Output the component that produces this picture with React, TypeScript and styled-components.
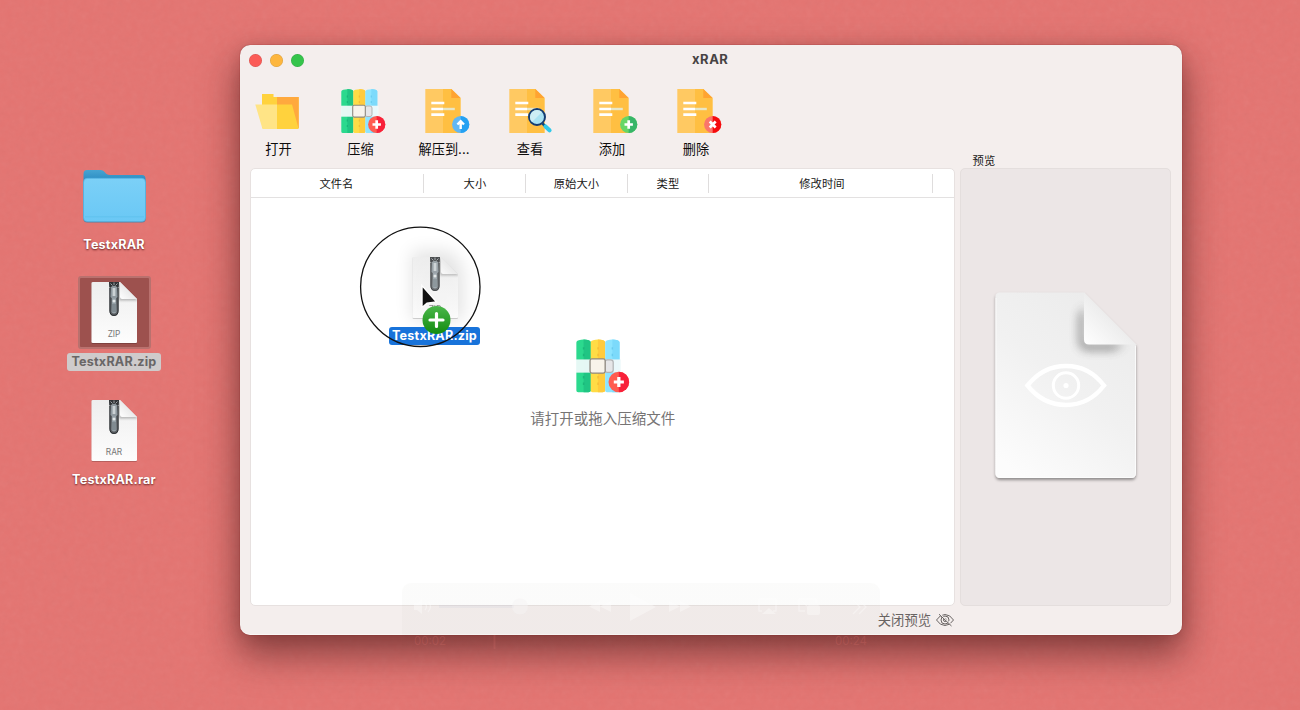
import React from "react";
import styled, { createGlobalStyle } from "styled-components";

const GlobalStyle = createGlobalStyle`
  * { box-sizing: border-box; }
  body {
    margin: 0;
    font-family: Inter, "Noto Sans CJK SC", sans-serif;
    color: #1c1a1a;
  }
  svg { display: block; overflow: visible; }
`;

const Desktop = styled.main`
  position: relative;
  width: 1300px;
  height: 710px;
  overflow: hidden;
  background: #e47471;
`;

const Grain = styled.svg`
  position: absolute;
  inset: 0;
  opacity: 0.06;
`;

const DesktopItem = styled.div<{ $top: number }>`
  position: absolute;
  left: 54px;
  top: ${(p) => p.$top}px;
  width: 120px;
  display: flex;
  flex-direction: column;
  align-items: center;
`;

const IconTile = styled.div<{ $selected?: boolean }>`
  width: 73px;
  height: 73px;
  border-radius: 3px;
  border: 2px solid ${(p) => (p.$selected ? "#b9716e" : "transparent")};
  background: ${(p) => (p.$selected ? "#9d514e" : "transparent")};
  display: flex;
  align-items: center;
  justify-content: center;
`;

const FileLabel = styled.span<{ $tone?: "muted" | "active"; $gap?: number }>`
  margin-top: ${(p) => p.$gap ?? 4}px;
  height: 18px;
  padding: 0 4px;
  border-radius: 3px;
  font-size: 12.6px;
  line-height: 18px;
  font-weight: 700;
  letter-spacing: 0.2px;
  white-space: nowrap;
  color: ${(p) => (p.$tone === "muted" ? "#696666" : "#fff")};
  background: ${(p) =>
    p.$tone === "muted" ? "#cfcbcb" : p.$tone === "active" ? "#1873da" : "transparent"};
  text-shadow: ${(p) => (p.$tone ? "none" : "0 1px 2px rgba(60,0,0,.75)")};
`;

const Window = styled.section`
  position: absolute;
  left: 240px;
  top: 45px;
  width: 941.5px;
  height: 590px;
  border-radius: 10px;
  background: #f4eeed;
  box-shadow: inset 0 -1px 0 rgba(255, 255, 255, 0.5), 0 0 1px rgba(110, 0, 0, 0.9),
    0 18px 36px 2px rgba(60, 20, 20, 0.55), 0 2px 14px rgba(60, 10, 10, 0.12);
  display: flex;
  flex-direction: column;
`;

const TitleBar = styled.header`
  height: 29px;
  padding: 0 14px 0 8px;
  display: grid;
  grid-template-columns: 100px 1fr 100px;
  align-items: center;
`;

const Lights = styled.div`
  display: flex;
  gap: 8px;
  padding: 1px 0 0 0.5px;
`;

const Light = styled.span<{ $color: string }>`
  width: 13px;
  height: 13px;
  border-radius: 50%;
  background: ${(p) => p.$color};
  box-shadow: inset 0 0 0 0.5px rgba(0, 0, 0, 0.15);
`;

const Title = styled.h1`
  margin: 0;
  padding: 0 0 1px 5px;
  text-align: center;
  font-size: 13px;
  line-height: 16px;
  font-weight: 700;
  letter-spacing: 0.5px;
  color: #474343;
`;

const Toolbar = styled.nav`
  height: 94px;
  padding: 13px 0 0 7px;
  display: flex;
  gap: 24px;
`;

const Tool = styled.button`
  width: 60px;
  height: 76px;
  padding: 0;
  border: 0;
  background: none;
  font: 13.2px/20px Inter, "Noto Sans CJK SC", sans-serif;
  color: #0d0c0c;
  white-space: nowrap;
  display: flex;
  flex-direction: column;
  align-items: center;
`;

const ToolText = styled.span<{ $nudge: number }>`
  margin-top: 2px;
  padding-left: ${(p) => Math.max(p.$nudge, 0)}px;
  padding-right: ${(p) => Math.max(-p.$nudge, 0)}px;
`;

const Content = styled.div`
  height: 438px;
  padding: 0 10.5px 0 10.4px;
  display: flex;
  gap: 5.1px;
`;

const FileTable = styled.section`
  width: 704.5px;
  border: 1px solid #e7e1e0;
  border-radius: 5px;
  background: #fff;
  display: flex;
  flex-direction: column;
`;

const HeaderRow = styled.div`
  height: 29px;
  border-bottom: 1px solid #e3e1e1;
  display: grid;
  grid-template-columns: 173px 102px 102px 81px 224px 20px;
  align-items: center;
`;

const HeaderCell = styled.div<{ $shift?: number }>`
  height: 19px;
  border-right: 1px solid #dfdddd;
  text-align: center;
  padding-right: ${(p) => Math.max(p.$shift ?? 0, 0)}px;
  padding-left: ${(p) => Math.max(-(p.$shift ?? 0), 0)}px;
  font-size: 11.3px;
  line-height: 20px;
  color: #181717;
  &:last-child { border: 0; }
`;

const DropArea = styled.div`
  flex: 1;
  padding-top: 138.5px;
  display: flex;
  flex-direction: column;
  align-items: center;
  & > svg { margin-right: 5px; }
`;

const DropHint = styled.p`
  margin: 11px 0 0;
  font-size: 14.5px;
  line-height: 22px;
  color: #767474;
`;

const PreviewColumn = styled.aside`
  width: 211px;
  margin-top: -17px;
  display: flex;
  flex-direction: column;
`;

const PreviewTitle = styled.h2`
  margin: 0 0 0 12.6px;
  height: 17px;
  font-size: 11.3px;
  line-height: 20px;
  font-weight: 400;
  color: #181616;
`;

const PreviewPane = styled.div`
  flex: 1;
  border: 1px solid #e4dedd;
  border-radius: 5px;
  background: #ece6e6;
  display: flex;
  justify-content: center;
  padding: 123px 0 0 1px;
`;

const Footer = styled.footer`
  flex: 1;
  display: flex;
  align-items: center;
  justify-content: flex-end;
  gap: 5px;
  padding: 0 227.5px 2px 0;
  font-size: 13.3px;
  color: #696463;
`;

const PlayerGhost = styled.div`
  position: absolute;
  left: 402px;
  top: 583px;
  width: 478px;
  height: 72px;
  border-radius: 9px;
  background: linear-gradient(rgba(60, 60, 30, 0.02) 70%, rgba(60, 60, 30, 0));
`;

const PlayerControls = styled.div`
  height: 48px;
`;

const PlayerTimes = styled.div`
  display: flex;
  justify-content: space-between;
  padding: 2px 13px 0 12px;
  font-size: 11.5px;
  line-height: 16px;
  color: rgba(235, 120, 115, 0.2);
`;

const DragLayer = styled.div`
  position: absolute;
  left: 360px;
  top: 226px;
`;

const DragLabel = styled(FileLabel)`
  position: absolute;
  left: 29px;
  top: 101px;
  width: 91px;
  padding: 0 3px;
  margin: 0;
`;

const DragLens = styled.svg`
  position: relative;
`;

function Zipper() {
  return (
    <g>
      <path d="M18 0H28L27.400 8V28.500Q27.400 34 23 34T18.600 28.500V8Z" fill="#5b5f63" />
      <path d="M18 0H28L27.600 5H18.400Z" fill="#303336" />
      <path d="M18.900 6V29Q19 33.400 23 33.400T27.100 29V6" fill="none" stroke="#2b2f32" strokeWidth="1" />
      <path d="M19.500 1.500 21.500 3.500M26.500 1.500 24.500 3.500M23 .5V3" stroke="#aab0b3" strokeWidth=".9" />
      <path d="M20 5Q23 2.500 26 5L26.500 15Q23 19 19.500 15Z" fill="#8f999f" />
      <path d="M21.600 6H24.400V14H21.600Z" fill="#cbd2d5" />
      <path d="M21 16H25L25.500 30Q23 33 20.500 30Z" fill="#95a0a6" />
      <circle cx="23" cy="19" r="1.500" fill="#e3e7e8" />
      <path d="M22 22V30M24 22V30" stroke="#59646a" strokeWidth=".7" />
    </g>
  );
}

function ArchivePage({ kind, id }: { kind: string; id: string }) {
  return (
    <>
      <defs>
        <linearGradient id={`${id}p`} x2="0" y2="1">
          <stop stopColor="#eeeeee" />
          <stop offset=".6" stopColor="#f7f7f7" />
          <stop offset="1" stopColor="#fdfdfd" />
        </linearGradient>
        <linearGradient id={`${id}f`} x1="0" y1="1" x2=".6" y2=".4">
          <stop stopColor="#fff" />
          <stop offset="1" stopColor="#e6e6e6" />
        </linearGradient>
        <filter id={`${id}s`} x="-30%" y="-30%" width="160%" height="160%">
          <feDropShadow dx="0" dy=".6" stdDeviation=".7" floodOpacity=".32" />
        </filter>
        <filter id={`${id}b`} x="-50%" y="-50%" width="200%" height="200%">
          <feGaussianBlur stdDeviation="1.200" />
        </filter>
        <clipPath id={`${id}c`}>
          <path d="M2 0H29L46 17V60Q46 61 44.500 61H2Q.5 61 .5 60V1Q.5 0 2 0Z" />
        </clipPath>
      </defs>
      <path d="M2 0H29L46 17V60Q46 61 44.500 61H2Q.5 61 .5 60V1Q.5 0 2 0Z" fill={`url(#${id}p)`} filter={`url(#${id}s)`} />
      <g clipPath={`url(#${id}c)`}>
        <path d="M28 1V18.500H47L44 15Z" fill="#777" opacity=".5" filter={`url(#${id}b)`} />
      </g>
      <Zipper />
      <path d="M29 0 46 17H31Q29 17 29 15Z" fill={`url(#${id}f)`} />
      <text x="23" y="55" textAnchor="middle" fontSize="8.300" fontFamily="Inter" fill="#777">{kind}</text>
    </>
  );
}

function ArchiveIcon({ kind, id }: { kind: string; id: string }) {
  return (
    <svg width="46" height="62" viewBox="0 0 46 62">
      <ArchivePage kind={kind} id={id} />
    </svg>
  );
}

function FolderIcon() {
  return (
    <svg width="64" height="54" viewBox="0 0 64 54">
      <defs>
        <linearGradient id="folderFront" x2="0" y2="1">
          <stop stopColor="#7bd0f7" />
          <stop offset="1" stopColor="#6ac8f5" />
        </linearGradient>
        <linearGradient id="folderBack" x2="0" y2="1">
          <stop stopColor="#46a4d2" />
          <stop offset=".2" stopColor="#2f8fc4" />
        </linearGradient>
      </defs>
      <path d="M1.500 5Q1.500 1 5 1H18.500C23 1 23 6 28 6H60Q63.500 6 63.500 10V47H1.500Z" fill="url(#folderBack)" />
      <rect x="1.300" y="9.500" width="62.500" height="44" rx="4" fill="#3a7fa8" opacity=".8" />
      <rect x="1.500" y="9.300" width="62" height="43.300" rx="4" fill="url(#folderFront)" stroke="#54b5e4" strokeWidth=".7" />
      <path d="M3 47.800H62" stroke="#58bdea" strokeWidth=".6" />
    </svg>
  );
}

type BadgeKind = "plus" | "up" | "add" | "remove";
const badgeColors: Record<BadgeKind, [string, string]> = {
  plus: ["#ff5c50", "#f8213a"],
  up: ["#60b7f4", "#24a1f2"],
  add: ["#66d667", "#37b568"],
  remove: ["#fa756b", "#f50b0e"],
};

function Badge({ kind }: { kind: BadgeKind }) {
  const [left, right] = badgeColors[kind];
  return (
    <g transform="translate(40.700 37.500)">
      <circle r="8.600" fill={left} />
      <path d="M0-8.600A8.600 8.600 0 0 1 0 8.600Z" fill={right} />
      {kind === "up" ? (
        <path d="M0 4.500V-2.500M-3.300 0 0-3.300 3.300 0" fill="none" stroke="#fff" strokeWidth="2.400" />
      ) : (
        <path
          d="M0-4.200V4.200M-4.200 0H4.200"
          stroke="#fff"
          strokeWidth="2.700"
          transform={kind === "remove" ? "rotate(45)" : undefined}
        />
      )}
    </g>
  );
}

function BooksIcon({ size = 50 }: { size?: number }) {
  const books = [
    ["#2bd98e", "#20c583", "#0f9d6a", 5.3],
    ["#ffdc46", "#ffcb3d", "#e8a92c", 17.3],
    ["#8de4ff", "#7cdafb", "#4fb9e0", 29.3],
  ] as const;
  return (
    <svg width={size} height={size} viewBox="0 0 50 50">
      {books.map(([light, dark, mark, x]) => (
        <g key={x} transform={`translate(${x} 0)`}>
          <path d="M0 4.500Q0 3.200 2 2.800Q6 1.500 10 2.800Q12 3.200 12 4.500V44.500Q12 46 10 46H1.500Q0 46 0 44.500Z" fill={light} />
          <path d="M6 2.100Q12 2.200 12 4.500V44.500Q12 46 10 46H6Z" fill={dark} />
          <path d="M6 8.500V10.500M6 14V16M6 32.500V34.500M6 38V40" stroke={mark} strokeWidth="1.300" opacity=".45" />
        </g>
      ))}
      <rect x="5" y="18.700" width="37.500" height="11" fill="#f1fafb" opacity=".94" />
      <rect x="29" y="19" width="7" height="10.500" rx="2" fill="#e6e6e8" stroke="#b1b3b5" strokeWidth="1" />
      <rect x="16.700" y="18.300" width="12.600" height="11.800" rx="1.500" fill="#f8f3ea" stroke="#8f8980" strokeWidth="1.100" />
      <Badge kind="plus" />
    </svg>
  );
}

function OpenIcon() {
  return (
    <svg width="50" height="50" viewBox="0 0 50 50">
      <path d="M10 7H21.500V10H46.700V41H10Z" fill="#ffd23d" />
      <path d="M25 10H46.700V41H25Z" fill="#ffa93e" />
      <path d="M3.300 17.500H25V42H10.500Z" fill="#ffe486" />
      <path d="M25 17.500H40L46.700 42H25Z" fill="#ffd23d" />
    </svg>
  );
}

function DocumentIcon({ badge, search }: { badge?: BadgeKind; search?: boolean }) {
  return (
    <svg width="50" height="50" viewBox="0 0 50 50">
      <path d="M5.300 2H31.300L40.500 11V46H5.300Z" fill="#ffc962" />
      <path d="M23 2H31.300L40.500 11V46H23Z" fill="#ffbf42" />
      <path d="M31.300 2 40.500 11H31.300Z" fill="#ffa331" />
      <path d="M11.300 16H24.300M11.300 22H23M11.300 27.700H24.300" stroke="#fff" strokeWidth="2.700" />
      <path d="M23 22H34.800" stroke="#e8e6c6" strokeWidth="2.400" />
      {badge && <Badge kind={badge} />}
      {search && (
        <g>
          <path d="m38.500 36.500 3 3" stroke="#0c4777" strokeWidth="2.500" />
          <path d="m41.500 39.500 4 3.700" stroke="#30c9ea" strokeWidth="4.200" strokeLinecap="round" />
          <circle cx="33" cy="30" r="8" fill="#a9e2f2" stroke="#153c72" strokeWidth="2" />
          <path d="M28 35A7 7 0 0 1 38 25Z" fill="#cdeef5" />
        </g>
      )}
    </svg>
  );
}

function PreviewIcon() {
  return (
    <svg width="142" height="188" viewBox="0 0 142 188">
      <defs>
        <linearGradient id="previewPage" x1=".8" y1="0" x2=".2" y2="1">
          <stop stopColor="#ebebeb" />
          <stop offset=".5" stopColor="#f1f1f1" />
          <stop offset="1" stopColor="#fcfcfc" />
        </linearGradient>
        <linearGradient id="previewFold" x1="0" y1="1" x2=".5" y2=".5">
          <stop stopColor="#fff" />
          <stop offset="1" stopColor="#ededed" />
        </linearGradient>
        <filter id="previewShadow" x="-20%" y="-20%" width="140%" height="140%">
          <feDropShadow dx="0" dy="2" stdDeviation="1.500" floodOpacity=".4" />
        </filter>
        <filter id="foldShadow" x="-50%" y="-50%" width="200%" height="200%">
          <feGaussianBlur stdDeviation="5" />
        </filter>
        <clipPath id="previewClip">
          <path d="M5 .5H89L141 52.500V181Q141 186 136 186H5Q1 186 1 181V5Q1 .5 5 .5Z" />
        </clipPath>
      </defs>
      <path d="M5 .5H89L141 52.500V181Q141 186 136 186H5Q.5 186 .5 181V5Q.5 .5 5 .5Z" fill="url(#previewPage)" filter="url(#previewShadow)" />
      <path d="M1 6V181Q1 185.500 6 185.500H136Q140.500 185.500 140.500 181V54" fill="none" stroke="#fff" opacity=".7" />
      <g clipPath="url(#previewClip)">
        <path d="M89 14V52H130L118 58H92Q84 57 84 49V24Z" fill="#505050" opacity=".68" filter="url(#foldShadow)" />
      </g>
      <path d="M89 .5 141 52.500H94Q89 52.500 89 47.500Z" fill="url(#previewFold)" />
      <g fill="none" stroke="#fff">
        <path d="M32.500 93.500Q48 74 71 74T109 93.500Q94 113 71 113T32.500 93.500Z" strokeWidth="4.500" />
        <circle cx="71" cy="93.500" r="12.700" strokeWidth="3" />
        <circle cx="71" cy="93.500" r="2.600" fill="#fff" stroke="none" />
      </g>
    </svg>
  );
}

function HiddenEye() {
  return (
    <svg width="18" height="14" viewBox="0 0 18 14" fill="none" stroke="#696463" strokeWidth="1">
      <path d="M.5 7Q4 1.500 9 1.500T17.500 7Q14 12.500 9 12.500T.5 7Z" />
      <circle cx="9" cy="7" r="4" />
      <circle cx="9" cy="7" r="1.500" />
      <path d="M3.600 .8 16 12.500" stroke="#f4eeed" strokeWidth="1.200" />
      <path d="M3 1.200 15.500 13" />
    </svg>
  );
}

function GhostControls() {
  return (
    <svg width="478" height="48" viewBox="0 0 478 48">
      <path d="M37 23.500H112" stroke="#7690c0" strokeOpacity=".06" strokeWidth="3" />
      <g fill="#fff" fillOpacity=".34">
        <circle cx="118" cy="23.500" r="8" fill="#f5f4f4" fillOpacity=".5" />
        <path d="M12 20H15L20 16V31L15 27H12Z" />
        <path d="M198 18V29L187 23.500ZM209 18V29L198 23.500ZM228 10 254 24 228 38ZM267 18V29L278 23.500ZM278 18V29L289 23.500ZM367 25 374 31H360Z" />
        <rect x="405" y="22" width="13" height="10" rx="2" />
      </g>
      <g fill="none" stroke="#fff" strokeOpacity=".34" strokeWidth="1.300">
        <path d="M23 20Q26 23.500 23 27M26 18Q31 23.500 26 29M360 28H357V16H374V28H371M403 28H397V16H414V20M400 18L405 23M451 17 458 24 451 31M457 17 464 24 457 31" />
      </g>
      <path d="M92.500 52V66" stroke="#e27370" strokeOpacity=".18" strokeWidth="2" />
    </svg>
  );
}

function DragFile() {
  return (
    <DragLens width="122" height="122" viewBox="0 0 122 122">
      <defs>
        <filter id="dragBlur" x="-60%" y="-60%" width="220%" height="220%">
          <feGaussianBlur stdDeviation="9" />
        </filter>
        <clipPath id="lensClip"><circle cx="60.500" cy="60.500" r="60" /></clipPath>
        <linearGradient id="addGreen" x2="0" y2="1">
          <stop stopColor="#4bb74b" />
          <stop offset="1" stopColor="#138c10" />
        </linearGradient>
      </defs>
      <g clipPath="url(#lensClip)">
        <path d="M52 25H91L103 42V94H52Z" fill="#000" opacity=".11" filter="url(#dragBlur)" />
      </g>
      <g transform="translate(52 31)" opacity=".85">
        <ArchivePage kind="ZIP" id="drag" />
      </g>
      <foreignObject x="0" y="0" width="122" height="122">
        <DragLabel $tone="active">TestxRAR.zip</DragLabel>
      </foreignObject>
      <circle cx="60.300" cy="60.800" r="59.700" fill="none" stroke="#111" strokeWidth="1.300" />
      <circle cx="76.500" cy="94" r="14" fill="url(#addGreen)" />
      <path d="M76.500 87.500V100.500M70 94H83" stroke="#fff" strokeWidth="3.200" strokeLinecap="round" />
      <path d="M62 59.500V81.500L67 77.200 76.500 76Z" fill="#111" stroke="#fff" strokeWidth="1.400" />
    </DragLens>
  );
}

const tools = [
  { label: "打开", nudge: 3, icon: <OpenIcon /> },
  { label: "压缩", nudge: -1, icon: <BooksIcon /> },
  { label: "解压到...", nudge: -2, icon: <DocumentIcon badge="up" /> },
  { label: "查看", nudge: 2, icon: <DocumentIcon search /> },
  { label: "添加", nudge: -2, icon: <DocumentIcon badge="add" /> },
  { label: "删除", nudge: -2, icon: <DocumentIcon badge="remove" /> },
];

const columns = [
  { label: "文件名", shift: 2 },
  { label: "大小", shift: 0 },
  { label: "原始大小", shift: 1 },
  { label: "类型", shift: 1 },
  { label: "修改时间", shift: -2 },
  { label: "", shift: 0 },
];

export default function App() {
  return (
    <Desktop>
      <GlobalStyle />
      <Grain width="1300" height="710">
        <filter id="grain">
          <feTurbulence type="fractalNoise" baseFrequency=".16" numOctaves="3" seed="4" />
          <feColorMatrix type="saturate" values="0" />
        </filter>
        <rect width="1300" height="710" filter="url(#grain)" />
      </Grain>

      <DesktopItem $top={169}>
        <FolderIcon />
        <FileLabel $gap={13}>TestxRAR</FileLabel>
      </DesktopItem>
      <DesktopItem $top={276}>
        <IconTile $selected><ArchiveIcon kind="ZIP" id="zip" /></IconTile>
        <FileLabel $tone="muted">TestxRAR.zip</FileLabel>
      </DesktopItem>
      <DesktopItem $top={394}>
        <IconTile><ArchiveIcon kind="RAR" id="rar" /></IconTile>
        <FileLabel>TestxRAR.rar</FileLabel>
      </DesktopItem>

      <Window>
        <TitleBar>
          <Lights>
            <Light $color="#fb5b57" />
            <Light $color="#fdb63e" />
            <Light $color="#35c44b" />
          </Lights>
          <Title>xRAR</Title>
        </TitleBar>
        <Toolbar>
          {tools.map((tool) => (
            <Tool key={tool.label}>
              {tool.icon}
              <ToolText $nudge={tool.nudge}>{tool.label}</ToolText>
            </Tool>
          ))}
        </Toolbar>
        <Content>
          <FileTable>
            <HeaderRow>
              {columns.map((column) => (
                <HeaderCell key={column.label} $shift={column.shift}>{column.label}</HeaderCell>
              ))}
            </HeaderRow>
            <DropArea>
              <BooksIcon size={60} />
              <DropHint>请打开或拖入压缩文件</DropHint>
            </DropArea>
          </FileTable>
          <PreviewColumn>
            <PreviewTitle>预览</PreviewTitle>
            <PreviewPane><PreviewIcon /></PreviewPane>
          </PreviewColumn>
        </Content>
        <Footer>
          <span>关闭预览</span>
          <HiddenEye />
        </Footer>
      </Window>

      <PlayerGhost>
        <PlayerControls><GhostControls /></PlayerControls>
        <PlayerTimes>
          <span>00:02</span>
          <span>00:24</span>
        </PlayerTimes>
      </PlayerGhost>

      <DragLayer><DragFile /></DragLayer>
    </Desktop>
  );
}
